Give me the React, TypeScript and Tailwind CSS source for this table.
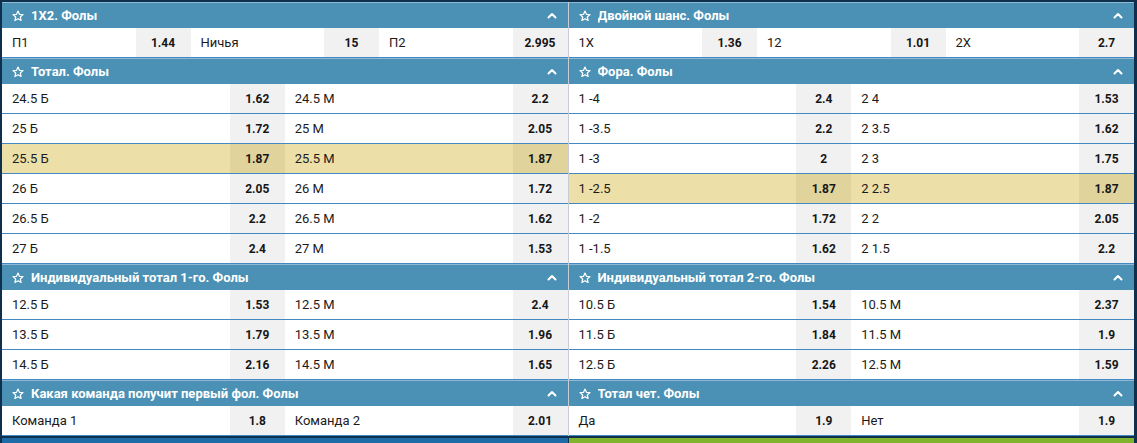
import React from 'react';

type Outcome = { label: string; odds: string };
type Row = { cells: Outcome[]; hl?: boolean };
type Section = { title: string; rows: Row[] };

const r = (...pairs: [string, string][]): Outcome[] => pairs.map(([label, odds]) => ({ label, odds }));

const left: Section[] = [
  { title: '1X2. Фолы', rows: [{ cells: r(['П1', '1.44'], ['Ничья', '15'], ['П2', '2.995']) }] },
  {
    title: 'Тотал. Фолы',
    rows: [
      { cells: r(['24.5 Б', '1.62'], ['24.5 М', '2.2']) },
      { cells: r(['25 Б', '1.72'], ['25 М', '2.05']) },
      { cells: r(['25.5 Б', '1.87'], ['25.5 М', '1.87']), hl: true },
      { cells: r(['26 Б', '2.05'], ['26 М', '1.72']) },
      { cells: r(['26.5 Б', '2.2'], ['26.5 М', '1.62']) },
      { cells: r(['27 Б', '2.4'], ['27 М', '1.53']) },
    ],
  },
  {
    title: 'Индивидуальный тотал 1-го. Фолы',
    rows: [
      { cells: r(['12.5 Б', '1.53'], ['12.5 М', '2.4']) },
      { cells: r(['13.5 Б', '1.79'], ['13.5 М', '1.96']) },
      { cells: r(['14.5 Б', '2.16'], ['14.5 М', '1.65']) },
    ],
  },
  {
    title: 'Какая команда получит первый фол. Фолы',
    rows: [{ cells: r(['Команда 1', '1.8'], ['Команда 2', '2.01']) }],
  },
];

const right: Section[] = [
  { title: 'Двойной шанс. Фолы', rows: [{ cells: r(['1X', '1.36'], ['12', '1.01'], ['2X', '2.7']) }] },
  {
    title: 'Фора. Фолы',
    rows: [
      { cells: r(['1 -4', '2.4'], ['2 4', '1.53']) },
      { cells: r(['1 -3.5', '2.2'], ['2 3.5', '1.62']) },
      { cells: r(['1 -3', '2'], ['2 3', '1.75']) },
      { cells: r(['1 -2.5', '1.87'], ['2 2.5', '1.87']), hl: true },
      { cells: r(['1 -2', '1.72'], ['2 2', '2.05']) },
      { cells: r(['1 -1.5', '1.62'], ['2 1.5', '2.2']) },
    ],
  },
  {
    title: 'Индивидуальный тотал 2-го. Фолы',
    rows: [
      { cells: r(['10.5 Б', '1.54'], ['10.5 М', '2.37']) },
      { cells: r(['11.5 Б', '1.84'], ['11.5 М', '1.9']) },
      { cells: r(['12.5 Б', '2.26'], ['12.5 М', '1.59']) },
    ],
  },
  { title: 'Тотал чет. Фолы', rows: [{ cells: r(['Да', '1.9'], ['Нет', '1.9']) }] },
];

const StarIcon = () => (
  <svg width="12" height="12" viewBox="0 0 24 24" fill="none" stroke="white" strokeWidth="2.4" strokeLinejoin="round">
    <polygon points="12,2 14.9,8.6 22,9.3 16.6,14 18.2,21 12,17.3 5.8,21 7.4,14 2,9.3 9.1,8.6" />
  </svg>
);

const ChevronIcon = () => (
  <svg width="10" height="7" viewBox="0 0 10 7" fill="none" stroke="white" strokeWidth="2" strokeLinecap="round" strokeLinejoin="round">
    <polyline points="1.5,5.5 5,2 8.5,5.5" />
  </svg>
);

function Block({ s }: { s: Section }) {
  return (
    <div>
      <div className="h-[26px] flex items-center pl-[10px] pr-[11px] gap-[7px] bg-[#4a91b5] border-t border-[#8fbad6] text-white font-bold text-[13px]">
        <StarIcon />
        <span className="flex-1 truncate">{s.title}</span>
        <ChevronIcon />
      </div>
      {s.rows.map((row, i) => (
        <div key={i} className="h-[30px] flex border-b border-[#4289c4]">
          {row.cells.map((c, j) => (
            <React.Fragment key={j}>
              <div
                className={`flex-1 min-w-0 flex items-center pl-[10px] text-[13px] text-[#1b1b1b] ${
                  row.hl ? 'bg-[#ecdfa8]' : 'bg-white'
                }`}
              >
                {c.label}
              </div>
              <div
                className={`w-[55px] shrink-0 flex items-center justify-center text-[12px] font-bold text-[#161616] ${
                  row.hl ? 'bg-[#e0d39c]' : 'bg-[#f1f1f1]'
                }`}
              >
                {c.odds}
              </div>
            </React.Fragment>
          ))}
        </div>
      ))}
    </div>
  );
}

export default function App() {
  return (
    <div className="w-[1137px] h-[443px] overflow-hidden bg-[#0e304d] pt-[2px] pl-[2px] pr-[3px] font-['Roboto','Liberation_Sans',sans-serif]">
      <div className="grid grid-cols-2 gap-px bg-[#c7cdd2]">
        <div className="flex flex-col">
          {left.map((s) => (
            <Block key={s.title} s={s} />
          ))}
        </div>
        <div className="flex flex-col">
          {right.map((s) => (
            <Block key={s.title} s={s} />
          ))}
        </div>
      </div>
      <div className="mt-[2px] flex gap-px h-[10px]">
        <div className="flex-1 bg-[#1d6ba7]" />
        <div className="flex-1 bg-[#7fb42c]" />
      </div>
    </div>
  );
}
